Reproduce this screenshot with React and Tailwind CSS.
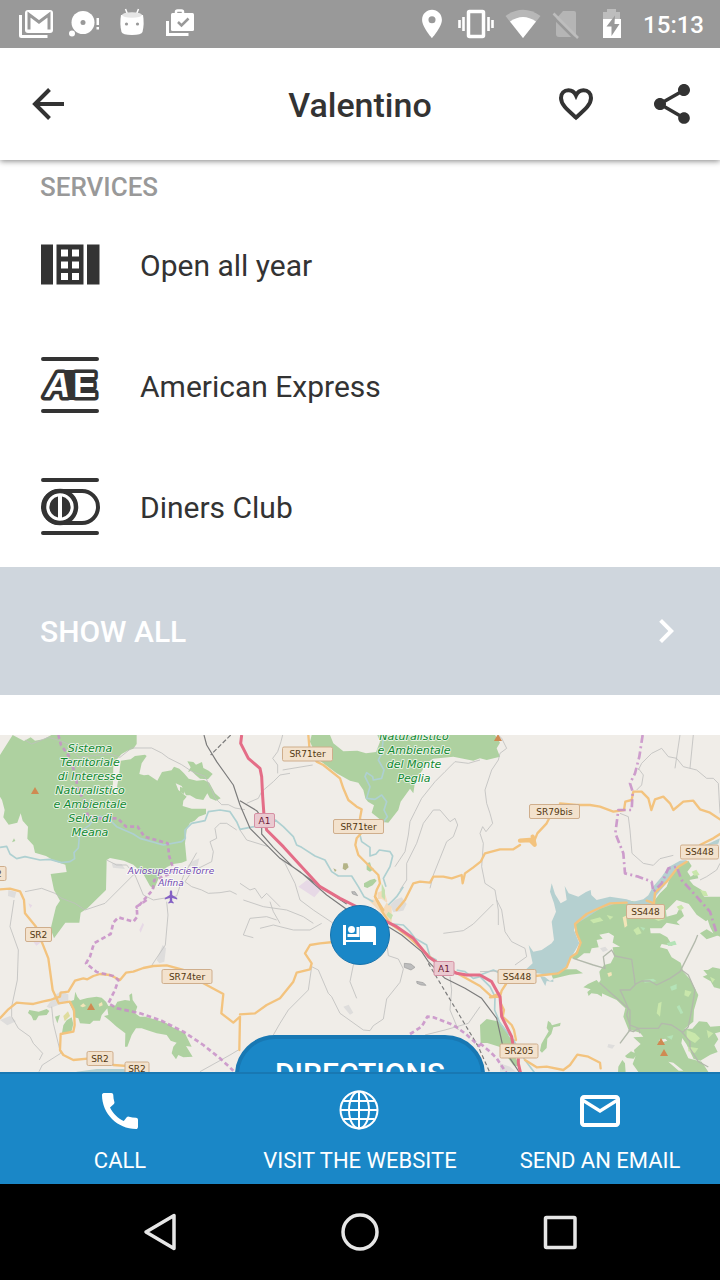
import React from "react";
import { MdCall, MdChevronRight, MdLocationOn, MdMailOutline, MdShare } from "react-icons/md";

const shields = [
  { x: 307.5, y: 19, w: 50, label: "SR71ter" },
  { x: 358.5, y: 91.5, w: 50, label: "SR71ter" },
  { x: 264.5, y: 85.5, w: 20, label: "A1", motorway: true },
  { x: 554.5, y: 76.5, w: 50, label: "SR79bis" },
  { x: 699.5, y: 117, w: 38, label: "SS448" },
  { x: 645.5, y: 176.5, w: 38, label: "SS448" },
  { x: 517, y: 241.5, w: 38, label: "SS448" },
  { x: 444, y: 233.5, w: 20, label: "A1", motorway: true },
  { x: -7, y: 138.5, w: 26, label: "SR2" },
  { x: 38.5, y: 199.5, w: 26, label: "SR2" },
  { x: 100, y: 323.5, w: 26, label: "SR2" },
  { x: 137, y: 334, w: 24, label: "SR2" },
  { x: 187, y: 241.5, w: 50, label: "SR74ter" },
  { x: 519, y: 316, w: 38, label: "SR205" },
];

const places = [
  {
    x: 90,
    y: 17,
    lines: ["Sistema", "Territoriale", "di Interesse", "Naturalistico", "e Ambientale", "Selva di", "Meana"],
  },
  { x: 414, y: 5, lines: ["Naturalistico", "e Ambientale", "del Monte", "Peglia"] },
];

const peaks = [
  [35, 56],
  [498, 3],
  [91, 272],
  [661, 307],
  [664, 318],
];

const StatusBar = () => (
  <div className="z-20 flex h-12 shrink-0 items-center justify-between bg-[#999999] pr-4 pl-3 text-white">
    <div className="flex">
      <svg className="size-12" viewBox="0 0 48 48" fill="none">
        <path d="M8.500 15v20.500q0 1 1 1h26" stroke="#fff" strokeWidth="3" />
        <rect x="13" y="10" width="28" height="23" rx="3" fill="#fff" />
        <path d="M17 29.500V14.500l10 7.500 10-7.500v15" stroke="#999999" strokeWidth="3" />
      </svg>
      <svg className="size-12" viewBox="0 0 48 48" fill="#fff">
        <circle cx="23" cy="22.500" r="11.500" />
        <circle cx="12" cy="33.500" r="3" />
        <circle cx="23" cy="22.500" r="2.500" fill="#999999" />
        <path d="M36.500 18h2.500v7h-2.500zM36.500 27h2.500v2.500h-2.500z" />
      </svg>
      <svg className="size-12" viewBox="0 0 48 48">
        <path d="M17.500 9l2 5M30.500 9l-2 5" stroke="#fff" strokeWidth="1.500" />
        <path d="M13 15h22q1.500 9-.5 17-1 3-10.500 3t-10.500-3q-2-8-.5-17z" fill="#fff" />
        <ellipse cx="24" cy="15" rx="10" ry="2.800" fill="#e6e6e6" />
        <circle cx="18.500" cy="24" r="1.600" fill="#999999" />
        <circle cx="29.500" cy="24" r="1.600" fill="#999999" />
      </svg>
      <svg className="size-12" viewBox="0 0 48 48" fill="none">
        <path d="M11.500 21v13.500h21" stroke="#fff" strokeWidth="3" />
        <path d="M20 14v-2q0-1.500 1.500-1.500h4q1.500 0 1.500 1.500v2" stroke="#fff" strokeWidth="2.500" />
        <rect x="15" y="13" width="23" height="18" rx="1.500" fill="#fff" />
        <path d="M22 22l3.500 3.500 7-7" stroke="#999999" strokeWidth="2.500" />
      </svg>
    </div>
    <div className="flex items-center gap-px">
      <div className="flex w-11 justify-center">
        <MdLocationOn size={34} />
      </div>
      <svg className="h-12 w-11" viewBox="0 0 44 48" fill="none" stroke="#fff">
        <rect x="13.500" y="11.500" width="15" height="25" rx="1" strokeWidth="3.500" />
        <path d="M8.500 17v14M33.500 17v14M4.500 20v8M37.500 20v8" strokeWidth="2.600" />
      </svg>
      <svg className="h-12 w-11" viewBox="0 0 44 48" fill="#fff">
        <path d="M23 38L5.500 16q17.500-12.500 35 0z" opacity=".3" />
        <path d="M23 38L10 21.500q13-9 26 0z" />
      </svg>
      <svg className="h-12 w-11" viewBox="0 0 44 48">
        <path d="M11 19l7-8h11q2 0 2 2v21q0 3-3 3h-14q-3 0-3-3z" fill="#b5b5b5" />
        <path d="M7 16l24 24" stroke="#999999" strokeWidth="2.500" />
        <path d="M8.500 13.500l24.500 24.500" stroke="#bdbdbd" strokeWidth="2.500" />
      </svg>
      <svg className="h-12 w-11" viewBox="0 0 44 48">
        <path d="M13 12h4V9h9v3h4v7H13z" fill="#bdbdbd" />
        <path d="M13 19h18v19H13z" fill="#fff" />
        <path d="M25 15.500l-8.500 11h5v9.500l8-12h-5z" fill="#999999" />
      </svg>
      <span className="ml-2 pt-0.5 text-2xl font-medium">15:13</span>
    </div>
  </div>
);

const Header = () => (
  <header className="z-10 flex h-28 shrink-0 items-center bg-white text-[#333333] shadow-[0_1px_6px_rgba(0,0,0,0.5)]">
    <div className="w-48">
      <button type="button" aria-label="Back" className="flex w-24 justify-center">
        <svg className="size-12" viewBox="0 0 48 48" fill="none" stroke="currentColor" strokeWidth="4">
          <path d="M40 24H12" />
          <path d="M25.500 9.500L11 24l14.500 14.500" />
        </svg>
      </button>
    </div>
    <h1 className="flex-1 pt-0.5 text-center text-[34px] leading-10 font-medium">Valentino</h1>
    <div className="flex w-48">
      <button type="button" aria-label="Add to favourites" className="flex w-24 justify-center">
        <svg className="size-12" viewBox="0 0 48 48" fill="none" stroke="currentColor" strokeWidth="4">
          <path d="M24 37.500C15 29.500 9 24.500 9 18c0-4.500 3-7.700 7.500-7.700 3.200 0 6 2 7.500 5.200 1.500-3.200 4.300-5.200 7.500-5.200 4.500 0 7.500 3.200 7.500 7.700 0 6.500-6 11.500-15 19.500z" />
        </svg>
      </button>
      <button type="button" aria-label="Share" className="flex w-24 justify-center">
        <MdShare size={48} />
      </button>
    </div>
  </header>
);

const CalendarIcon = () => (
  <svg className="size-15" viewBox="0 0 60 60" fill="#333333">
    <path d="M1 9.500h12v40H1zM47 9.500h12.500v40H47z" />
    <path
      fillRule="evenodd"
      d="M16.500 9.500h27v40h-27zM21 14.500v7h7v-7zM32 14.500v7h7v-7zM21 26.500v7h7v-7zM32 26.500v7h7v-7zM21 38v7h7v-7zM32 38v7h7v-7z"
    />
  </svg>
);

const AmexIcon = () => (
  <svg className="size-15" viewBox="0 0 60 60" fill="none" stroke="#333333" strokeLinecap="round">
    <path d="M3 3h54M3 55h54" strokeWidth="4" />
    <path d="M24 14h30v30H24z" fill="#333333" stroke="none" />
    <g
      fill="#fff"
      fontFamily="Liberation Sans, sans-serif"
      fontSize="35"
      fontWeight="bold"
      strokeWidth="7"
      strokeLinejoin="round"
      paintOrder="stroke"
    >
      <text x="5" y="41" fontStyle="italic">
        A
      </text>
      <text x="33" y="41">
        E
      </text>
    </g>
  </svg>
);

const DinersIcon = () => (
  <svg className="size-15" viewBox="0 0 60 60" fill="none" stroke="#333333" strokeLinecap="round">
    <path d="M3 3h54M3 56h54" strokeWidth="4" />
    <rect x="3" y="14" width="55" height="32" rx="16" strokeWidth="4" />
    <circle cx="20" cy="30" r="16" strokeWidth="4.500" />
    <path d="M20 12h12l-3 5zM20 48h12l-3-5z" fill="#333333" stroke="none" />
    <path d="M18 19.500a10.700 10.700 0 0 0 0 21zM22 19.500a10.700 10.700 0 0 1 0 21z" fill="#333333" stroke="none" />
  </svg>
);

const services = [
  { name: "Open all year", Icon: CalendarIcon },
  { name: "American Express", Icon: AmexIcon },
  { name: "Diners Club", Icon: DinersIcon },
];

const Terrain = () => (
  <g transform="translate(0 -5) scale(0.33333)" fill="none" strokeLinejoin="round">
    {/* forest */}
    <g fill="#aed1a0">
      <path d="M0 75L38 15 72 33 92 22 105 32 130 28 160 12 410 12 410 42 400 56 382 62 365 72 352 86 340 110 338 190 348 196 352 165 358 130 362 92 392 88 405 78 435 74 440 78 425 100 418 132 432 136 445 134 472 152 486 126 515 121 522 110 538 116 552 130 566 146 590 152 612 150 628 158 645 190 662 205 648 212 630 205 622 190 610 210 588 206 570 196 558 196 545 168 527 160 535 180 560 200 550 212 548 228 575 236 618 236 618 252 596 260 584 272 570 278 560 300 555 340 560 392 545 398 520 402 500 412 478 440 462 478 450 468 430 432 400 404 372 392 330 384 320 390 318 480 262 535 242 548 238 578 196 578 162 625 152 596 168 530 180 512 162 480 152 432 200 426 196 404 165 394 138 378 105 368 100 346 82 326 84 290 68 272 62 250 52 278 26 284 10 262 14 240 6 210 0 200z" />
      <path d="M562 94l18 2 8 8 18-8 4 18 16 8 12 10-14 16-24-2-14-12-12-12-10 4 8-14zM42 325l4 8-10 4zM540 170l16 6-4 16-12-6z" />
      <path d="M935 15L930 35 945 68 960 92 1010 130 1050 152 1075 158 1090 180 1096 205 1104 215 1122 226 1115 248 1150 276 1165 278 1195 240 1202 215 1230 176 1240 190 1246 150 1268 120 1274 102 1300 86 1360 80 1420 92 1440 85 1460 90 1500 80 1490 55 1500 38 1485 15 1132 15 1140 35 1128 66 1098 70 1072 62 1030 64 1000 40 990 15z" />
      <path d="M1100 400l10-3 4 14 8 6-12 8-10-6zM1092 460l18-10 14-4 6 6-12 14-16 8-10-4z" />
      <g transform="translate(0 510)">
        <path d="M88 330l28 5 24-8 8 6-8 12-24 2-8 14-8 0-6-14-10-8zM205 305L222 300 226 275 232 290 240 300 262 294 290 290 305 293 318 305 325 318 345 318 352 305 375 300 390 302 388 285 396 280 398 300 412 320 405 340 420 350 436 350 470 360 500 370 515 380 535 390 555 400 560 410 575 440 558 438 578 470 550 472 535 465 528 478 515 460 520 440 530 428 512 422 500 405 470 400 440 390 425 385 408 385 395 405 382 440 375 440 376 400 350 380 330 362 312 348 325 345 322 325 305 345 300 362 280 362 270 372 240 370 235 355 222 352 218 330z" />
        <path d="M215 352l5 20-5 20-30 12 5-28 10-15zM165 350l15-5-8 25z" />
      </g>
      <g transform="translate(1440 0)">
        <path d="M315 535L335 520 380 508 450 512 490 520 520 515 540 490 560 470 575 430 600 405 625 392 635 408 622 425 632 440 650 428 655 445 628 450 640 465 665 480 672 500 690 505 720 525 720 620 700 610 690 590 680 560 660 530 620 520 590 510 560 540 340 545z" />
      </g>
      <g transform="translate(1440 510)">
        <path d="M288 68L340 26 400 12 440 8 520 0 555 12 560 50 590 42 600 22 612 48 590 66 600 76 560 68 545 85 510 85 512 100 540 100 562 112 578 138 545 132 540 142 562 148 575 172 602 188 610 215 632 240 655 285 642 330 640 365 612 388 604 430 625 475 665 485 688 520 478 520 458 492 466 470 462 450 482 432 460 412 490 410 480 398 445 388 430 350 436 325 410 300 365 280 348 262 362 240 358 215 372 195 392 190 402 170 398 142 420 140 398 128 402 108 386 98 358 104 368 116 350 120 356 142 335 145 330 160 312 160 290 178 275 175 292 150 300 130 285 95z" />
        <path d="M242 368l-2 10-20 4-6 20-12 14-2 28-14 14-6-6 4-20 8-14 14-24-6-10 4-22 8 6 4 8zM310 262l14-10 26-12 8 10-6 12 14 8 0 20-14-8-18-2-8 8-4-12 10-8zM215 226l28-18 46 0 20 12-40 4-50 12zM0 375l20-18 40 8 18 24 10 22 20 10-16 20 28 60-20-5-40-55-38-12-20 0zM670 210l14 0 14-8 22 4 0 60-18-4-10-18-24-14 14-6zM612 386l25 0 20-22 24 2 10 14 29-2 0 18-15 4 10 18-12 18 10 20-22 8-30 18-20-5-12-25-10-20-14-20zM625 10l30-20 65 0 0 66-22-8-20 16-28-20z" />
        <path d="M415 500l12-20 8 10 2 28h-23zM435 468l18-14 18 8-10 14-20-2zM660 100l20-12 20 12 20-10 0 14-40 14z" />
      </g>
    </g>
    {/* clearings */}
    <g fill="#c9e7ab">
      <path d="M2055 780l20 5-10 16-12-5zM1975 820l10-5-5 45-10-10zM2060 900l25 10 15 15-15 14-25-14zM2065 950l30 5-10 14-20-5zM1900 600l15-10 10 20-15 5zM2030 530l14-6 8 10-12 8zM1950 560l25-5 20 12-20 6zM1770 570l30-8 10 10-30 8zM2130 740l15 8-8 10zM2120 900l20 10-15 15zM1820 555l20 5-10 9zM2075 425l14-6 10 16-16 2zM2100 480l18 4 6 14-14 0z" />
    </g>
    <g fill="#b4e3b7">
      <path d="M2000 640l25-8 5 12-25 4zM2010 770l20-8 0 15-15 5zM2030 830l8-5 12 24-8 3zM2000 920l20-5-5 14zM1930 750l30-4 10 8-36 4zM1920 590l16 4-6 8z" />
    </g>
    <g fill="#f0ede8">
      <path d="M1976 930l20-4 6 6-20 6zM2005 995l15 3 30 24h-14z" />
    </g>
    <path d="M1868 562l10-5 4 30-8 6zM1822 730l12-4 2 10-10 5zM240 828l10-8 8 8-10 4zM296 822l10-6 2 10-10 4z" fill="#f3e5b8" />
    {/* built-up areas */}
    <g fill="#dedddc">
      <path d="M140 830l25-35 20-12 20 10 0 20-25 10-30 12zM470 690l18-45 10 10-5 40-15 5zM0 870l30-12 18 16-26 12zM1170 525l15-15 20-8 15 20-10 20-30 5zM1500 1000l30 10 18 15-48 0zM598 385l-24 10-12 14 30 0zM335 400l30 2 10 15-36-4zM25 480l24 6-5 18-20-6zM1800 655l16-5 8 10-15 6zM1825 942l20 4-8 10-15-4zM1030 830l16-6 14 24-10 6z" />
    </g>
    <path d="M895 470l26-20 48 22-26 30zM100 635l25 0-16 12zM418 600l10-22 4 6-10 24zM85 520l12 6-6 8z" fill="#e7d9e6" />
    <path d="M1132 488l20-8 10 34-12 22-15-8zM1105 510l70 70 0-50-30-24z" fill="#f5dcbc" />
    <path d="M1145 460l10 20 0 30-10-10zM1165 545l14 10-6 14-14-14z" fill="#c5e0ae" />
    <path d="M190 858l14-14 6 14-16 16z" fill="#dfdc9e" />
    <path d="M1030 400l12 0 4 12-10 9-8-5zM1000 415l10 5-5 6z" fill="#b4b487" />
    <path d="M1213 700l20 2 12 10-12 8-20-8zM1250 754l20 4 8 8-15-1-12-5zM1055 485l10 0 8 12-15-5z" fill="#bdbdbd" stroke="#999" strokeWidth="2" />
    {/* lake */}
    <g fill="#b5d0d0">
      <path d="M1655 460L1665 492 1682 520 1700 510 1694 468 1706 490 1735 500 1758 486 1772 480 1774 495 1790 510 1830 500 1880 508 1900 515 1930 508 1945 496 1958 472 1985 440 2005 412 2040 392 2060 390 2030 418 1995 465 1970 495 1958 525 1900 522 1850 520 1800 536 1762 562 1728 582 1722 600 1738 640 1722 668 1712 685 1700 708 1682 724 1650 735 1600 728 1572 724 1598 700 1586 645 1600 665 1625 660 1655 640 1662 630 1655 575 1668 545 1662 520 1650 485z" />
      <path d="M1620 738l15 3 15 12 10-5 0 8-20-3-4 15-8-14zM230 1025l60-8h80l30 8v30H200z" />
      <path d="M2160 325l-30 14-25 10 50-8z" />
    </g>
    {/* rivers */}
    <g stroke="#aed0d1" strokeWidth="5">
      <path d="M0 352L20 349 30 372 50 386 75 380 120 390 150 388 185 398 210 395 224 386 222 368 235 354 238 320 250 298 268 286 282 264 300 258 330 270 350 290 400 312 420 325 490 345 545 335 556 325 555 300 575 280 615 272 625 245 660 240 690 245 710 275 720 298 750 292 800 284 826 270 850 290 880 320 890 345 905 352 945 378 975 390 995 425 1015 438 1055 438 1075 470 1092 500 1120 515" />
      <path d="M1150 25L1145 70 1135 90 1152 120 1145 145 1120 150 1118 140 1100 128 1095 140 1110 170 1100 205 1125 208 1145 195 1160 215 1152 240 1162 260 1140 290M1080 315L1085 335 1110 352 1110 378 1128 372 1138 360 1170 365 1178 378 1170 410 1150 445 1158 470" />
      <path d="M1180 582L1210 585 1230 605 1245 625 1280 645 1290 680 1310 690M1210 470L1190 500 1165 525M1370 720L1395 725 1420 745 1440 740 1470 770 1485 800 1484 840 1500 880 1540 930 1575 990 1605 1030M1440 735L1480 720 1500 730" />
    </g>
    {/* minor roads */}
    <g stroke="#bfbfbe" strokeWidth="2.500">
      <path d="M75 30l20 12 50-20 35 10 25 10 30 40 45-5 50-5 30 10 35-28 60 0 30 15 20 15 40 20 30 20 40 15 20 40 10 25 20 20 20 0 20 10 30 5" />
      <path d="M710 300l-30-20-20 0-15 15 5 30-20 10 10 30-5 30-60 30-20 30 20 15 30 10 20 10 35-2 30-5 20 10" />
      <path d="M320 390l30 15 30 0 25 30 25 60 30 15 70-12 20-60 40-70M75 485l50-10 40 15 20 15 40 15 30 20 60-20 40-40 50-50M42 510l-12 80 25 70-3 90-17 80 0 30 20 35 35 25 10 20 28 30-10 20M155 830l5 50 22 90-55 35-10 20M500 515l4 40-8 90-40 60M600 1025l90-50 25-15" />
      <path d="M848 15l-5 20-10 30-15 20 15 20 0 25M848 120l90-15M740 220l35-15 10-20 35-30 20-20 30-5M720 460l30 20 15-5 20 30 15-15 40 40M720 300l20 30 65 20 50 50 30 60 15 50 40 30 60 40" />
      <path d="M1440 90l-35 10-40-5-30 30-30 30-40 50-20 40-15 30-5 40-10 50-30 45M1200 480l20-30 0-50 30-60 20-60 30-40 20 0 30 35 15-10 8 20-13 35-20 15-20 50-20 50-10 40" />
      <path d="M1495 15l10 10 15 30-20 15-5 20-20 30-20 60 5 40 10 30 8 30-20 25-10-15-8 20 10 30-5 70 10 50 30 20 10 60 0 45M2040 15l-15 100M2080 15l-10 100M1915 120l10-20 30-30 30-15 20 25 25 5 20 25 40 10 30 25 20 0 15 15 5 90" />
      <path d="M1860 250l25 10 5 40 6 70 34 30 30 6 20-20 40-10M1915 115l15 20-5 30-15 15M2100 450l20-10 30-20 10-20M1490 510l15 30 10 65 20 30 40 20 5 25-35 25M1440 725l60-2" />
      <path d="M810 515l10 30 20 35M830 570l-30-10-50 5-20 50 30 8M730 510l60 20 70 10 50 20 30 20M780 595l40-10 60 15 50 0 35-20M935 710l20 10 30 70 10 10 25 50 70 50 20 2 10-15 30-20 10-60 40-50 10-40-15-30-30-10-5-45M935 710l-10 70-60 60-25 40-20 35M1090 655l-30 50-10 50 20 50" />
      <path d="M1350 740l5 40-5 60 25 60M1275 915l60-15 70-20 35-50M1330 610l60-8 30-20 60-60" />
    </g>
    <g stroke="#b3b9ac" strokeWidth="4">
      <path d="M1720 685l60 20 35 10-5-35 25-20 10 18 50 10 8 55 2 20 20-10 25 0 20 12 40-20 30-20 30-60 15-30 8-20M1910 760l-20 20-30 0 10 20 15 35-5 20 10 30 25 10 60 0 10-15 30 5 30 20 25 30 0 20 25 40 30 16M2045 720l20 15 20 45-10 60-10 50-20 20M1920 910l-5-15-15 10-15-5M1860 940l30-40 0-60-90-80" />
    </g>
    {/* railways */}
    <g stroke="#7b7b7b" strokeWidth="3.500">
      <path d="M612 15l8 30 30 50 50 70 20 60 30 70 30 30 60 60 60 40 80 70 70 50M720 212l50 30 15 20 0 50 35 40 60 60 70 50 90 60M1165 590l40 25 60 50 20 30 50 50 60 30 50 30 45 60 20 90 60 90" />
      <path d="M692 15l-60 60" strokeDasharray="14 6" />
      <path d="M1285 700l150 250 40 90" strokeDasharray="12 8" />
    </g>
    {/* secondary roads */}
    <g stroke="#f3c37e" strokeWidth="7" strokeLinecap="round">
      <path d="M0 478L30 476 60 484 72 510 75 550 108 590 125 635 145 685 158 780 176 820 210 815 222 840 224 885 220 905 182 912 180 960 190 975 220 990 270 985M340 1005L440 1012" />
      <path d="M0 865L25 838 50 818 75 820 100 822 130 814 150 810 180 800 182 788 205 785 225 752 250 745 262 748 280 738 300 732 330 735 360 750 378 728 400 725 430 714 460 708 500 706 550 720 610 760 670 792 664 850 700 878 720 860 718 960" />
      <path d="M925 15L928 50 950 95 970 105 1020 145 1030 175 1045 210 1070 230 1085 238 1080 265 1092 300 1070 325 1066 345 1075 375 1105 405 1135 435 1140 460 1130 480 1125 500 1150 540" />
      <path d="M720 853L765 850 800 825 840 805 880 755 890 728 930 718 935 700 915 670 930 645 960 640 1000 636M1190 540L1215 510 1240 460 1260 455 1290 458 1300 440 1330 440 1355 445 1385 435 1388 460 1395 430 1420 412 1442 395 1455 370 1500 358 1540 358 1560 345M1600 340L1612 310 1640 280 1650 260M1680 220L1730 225 1770 225 1800 230 1840 245 1872 240 1876 215 1895 210 1900 185 1925 185 1945 205 1954 240 1965 208 1990 200 2010 220 2020 240 2050 215 2080 212 2100 238 2130 248 2160 268" />
      <path d="M1560 332l30-2 14 14-6-24" strokeWidth="13" />
      <path d="M2160 312L2140 325 2100 345M2060 395L2035 410 2000 455 1965 488 1962 520 1940 512M1880 518L1830 520 1785 540 1760 552 1725 582 1730 610 1742 638 1730 670 1712 682 1700 712 1675 730 1605 738M1518 762L1505 782 1500 800 1470 802 1500 790 1502 820 1512 840 1508 860 1535 885 1542 900 1548 930M1575 990L1610 1012 1640 1010 1690 1020 1710 1005 1732 974 1765 980 1800 998 1802 1015M1125 500L1150 550 1170 580 1225 620 1300 690 1390 740 1440 768 1475 800" />
    </g>
    {/* motorway */}
    <path
      d="M725 15L722 40 745 85 780 115 785 140 788 200 793 270 800 300 850 350 900 405 960 470 1020 505 1060 525 1140 565 1190 590 1240 625 1285 680 1330 710 1370 730 1400 735 1440 735 1475 755 1500 800 1505 860 1535 920 1540 950M1555 985L1555 1000 1562 1030"
      stroke="#e46d87"
      strokeWidth="9"
    />
    {/* region boundaries */}
    <g stroke="#c88fc8" strokeWidth="8" opacity=".85">
      <path d="M175 15l8 30 25 35 20 60 5 40 20 30 10 45 30 10 60 0 25 25 35 0 20 30 70 20 5 40 10 30-5 20-50 20-5 30-35 40-15 15" strokeDasharray="12 9" />
      <path d="M440 510L410 530 412 560 400 575 355 562 340 578 332 612 282 640 270 680 258 700 290 726 340 738 355 750 345 780 325 820 352 835 420 850 480 870 550 905 610 945 660 985 700 1022" strokeDasharray="14 9" />
      <path d="M1928 15L1918 80 1905 130 1890 160 1898 185 1895 240 1855 240 1846 310 1870 370 1875 430 1915 440 1955 455 1960 485 1985 460 2005 415 2030 410 2045 450 2090 500 2130 545 2150 610" strokeDasharray="24 10 6 10" />
      <path d="M1230 912L1265 890 1282 860 1300 862 1360 885 1395 910 1440 950M1440 940L1470 965 1490 985 1520 1030" strokeDasharray="14 9" />
    </g>
  </g>
);

const RegionMap = () => (
  <svg
    className="absolute inset-0 size-full bg-[#f0ede8]"
    viewBox="0 0 720 400"
    preserveAspectRatio="xMidYMin slice"
    role="img"
    aria-label="Map of the area around the hotel"
  >
    <Terrain />
    {peaks.map(([x, y]) => (
      <path key={`${x}-${y}`} d={`M${x} ${y - 4}l4 7h-8z`} fill="#cf8a52" />
    ))}
    <path
      d="M171 155l1.200 1.500v3.500l5 3v1.500l-5-1.500v3l1.500 1.500v1l-2.700-.8-2.700.8v-1l1.500-1.500v-3l-5 1.500v-1.500l5-3v-3.500z"
      fill="#8461c4"
    />
    <g fontFamily="DejaVu Sans, sans-serif" textAnchor="middle">
      <g fontStyle="italic" paintOrder="stroke" strokeLinejoin="round" strokeWidth="2">
        {places.map((place) => (
          <text key={place.y} fontSize="11" fill="#118a31" stroke="#ffffffb0">
            {place.lines.map((line, i) => (
              <tspan key={line} x={place.x} y={place.y + i * 14}>
                {line}
              </tspan>
            ))}
          </text>
        ))}
        <text fontSize="9" fill="#7049b0" stroke="#ffffffb0">
          <tspan x="171" y="139">AviosuperficieTorre</tspan>
          <tspan x="171" y="151">Alfina</tspan>
        </text>
      </g>
      {shields.map((s) => (
        <g key={`${s.x}-${s.y}`}>
          <rect
            x={s.x - s.w / 2}
            y={s.y - 7}
            width={s.w}
            height="14"
            rx="1.500"
            fill={s.motorway ? "#eac9d0" : "#f3e2cd"}
            stroke={s.motorway ? "#d590a3" : "#cfae8c"}
          />
          <text x={s.x} y={s.y + 3} fontSize="9" fill={s.motorway ? "#6b1a38" : "#523710"}>
            {s.label}
          </text>
        </g>
      ))}
    </g>
  </svg>
);

const GlobeIcon = () => (
  <svg className="size-12" viewBox="0 0 48 48" fill="none" stroke="currentColor" strokeWidth="2">
    <circle cx="23" cy="23" r="18.500" />
    <ellipse cx="23" cy="23" rx="10" ry="18.500" />
    <path d="M23 4.500v37M4.500 23h37M7.500 14h31M7.500 32h31" />
  </svg>
);

const actions = [
  { label: "CALL", Icon: () => <MdCall size={48} /> },
  { label: "VISIT THE WEBSITE", Icon: GlobeIcon },
  { label: "SEND AN EMAIL", Icon: () => <MdMailOutline size={48} /> },
];

const App = () => {
  return (
    <div className="flex h-screen flex-col overflow-hidden bg-white font-[Roboto,sans-serif] text-[#333333]">
      <StatusBar />
      <Header />

      <main className="min-h-0 flex-1 overflow-y-auto [scrollbar-width:none]">
        <section>
          <h2 className="h-11 px-10 pt-3 text-[26px] leading-[30px] font-medium text-[#999999]">SERVICES</h2>
          <ul>
            {services.map(({ name, Icon }) => (
              <li key={name} className="flex h-[121px] items-center gap-10 px-10 text-[30px]">
                <Icon />
                <span className="pt-0.5">{name}</span>
              </li>
            ))}
          </ul>
          <button
            type="button"
            className="flex h-32 w-full items-center justify-between bg-[#cfd6dd] pr-[30px] pl-10 text-[30px] font-medium text-white"
          >
            SHOW ALL
            <MdChevronRight size={48} />
          </button>
        </section>

        <section className="relative mt-10 h-[400px] overflow-hidden">
          <RegionMap />
          <div className="absolute top-[170px] left-1/2 flex size-15 -translate-x-1/2 items-center justify-center rounded-full border border-[#1672ac] bg-[#1a87c7]">
            <svg className="size-9" viewBox="0 0 36 36" fill="#fff">
              <path d="M1 8h3v15h30v5h-3v-3H4v3H1z" />
              <path d="M18 9h13q3 0 3 3v13H18z" />
              <circle cx="9.500" cy="12.500" r="3.500" />
              <path d="M14.500 10h3v10h-12v-3h9z" />
            </svg>
          </div>
          <button
            type="button"
            className="absolute top-[300px] left-1/2 h-20 w-[250px] -translate-x-1/2 rounded-full border-4 border-[#1878b3] bg-[#1a87c7] pb-1 text-[30px] font-medium text-white"
          >
            DIRECTIONS
          </button>
        </section>
      </main>

      <footer className="grid h-28 shrink-0 grid-cols-3 border-t-2 border-[#1878b3] bg-[#1a87c7] text-white">
        {actions.map(({ label, Icon }) => (
          <button
            key={label}
            type="button"
            className="flex flex-col items-center justify-start gap-[13px] pt-[13px] text-[22px] leading-[26px]"
          >
            <Icon />
            {label}
          </button>
        ))}
      </footer>

      <nav className="flex h-24 shrink-0 items-center justify-around bg-black px-15 text-[#e6e6e6]">
        <button type="button" aria-label="Back">
          <svg className="size-12" viewBox="0 0 48 48" fill="none" stroke="currentColor" strokeWidth="3.500" strokeLinejoin="round">
            <path d="M38 7.500v33L10 24z" />
          </svg>
        </button>
        <button type="button" aria-label="Home">
          <svg className="size-12" viewBox="0 0 48 48" fill="none" stroke="currentColor" strokeWidth="3.500">
            <circle cx="24" cy="24" r="17" />
          </svg>
        </button>
        <button type="button" aria-label="Recent apps">
          <svg className="size-12" viewBox="0 0 48 48" fill="none" stroke="currentColor" strokeWidth="3.500">
            <rect x="9.500" y="9.500" width="29.500" height="30" rx="1" />
          </svg>
        </button>
      </nav>
    </div>
  );
};

export default App;
